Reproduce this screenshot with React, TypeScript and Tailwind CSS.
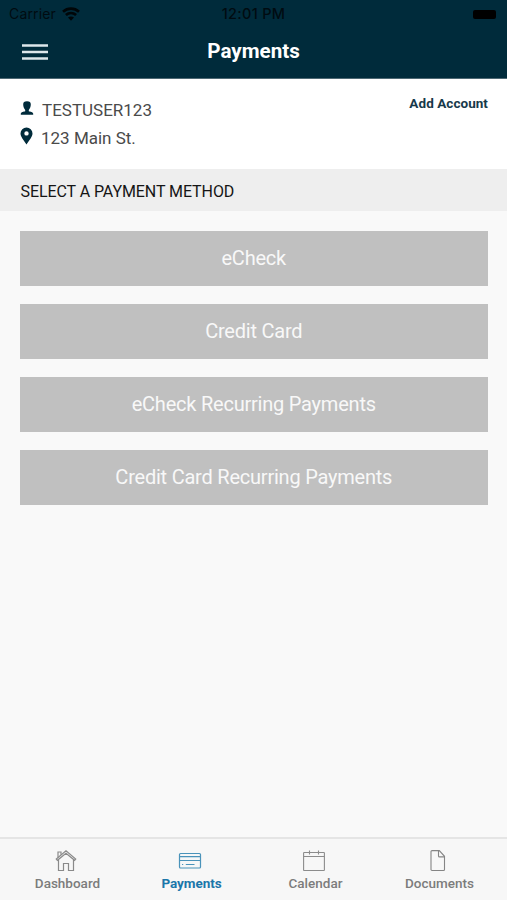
import type { ReactNode } from "react";

const methods = ["eCheck", "Credit Card", "eCheck Recurring Payments", "Credit Card Recurring Payments"];

function WifiIcon() {
  return (
    <svg className="ml-[6px] h-[15px] w-[18px]" viewBox="0 0 18 15" fill="none" stroke="#000608" strokeWidth="2.7">
      <path d="M1 4.7C5.6.6 12.4.6 17 4.7M3.9 8.1c3-2.7 7.2-2.7 10.2 0" />
      <path d="M6 10.5c1.7-1.5 4.300-1.500 6 0L9 13.700Z" fill="#000608" stroke="none" />
    </svg>
  );
}

function MenuIcon() {
  return (
    <svg className="h-[16px] w-[26px]" viewBox="0 0 26 16" fill="none" stroke="#dde7eb" strokeWidth="2.500">
      <path d="M0 1.500h26M0 8h26M0 14.500h26" />
    </svg>
  );
}

function HomeIcon() {
  return (
    <svg className="h-[22px] w-[22px]" viewBox="0 0 22 22" fill="none" stroke="#8a8a8a" strokeWidth="1.200">
      <path d="M3.500 10v10.500h5v-7h5v7h5V10" />
      <path d="M1.300 9 11 .9 20.700 9l-1.100 1.300L11 3.200l-8.600 7.100Z" />
      <path d="M3 7.400V2h3v2.800" />
    </svg>
  );
}

function CardIcon() {
  return (
    <svg className="h-[22px] w-[24px]" viewBox="0 0 24 22" fill="none" stroke="#4a93ba" strokeWidth="1.200">
      <rect x="1.500" y="3.500" width="21" height="14.500" rx="1" />
      <path d="M1.500 6.700h21M1.500 10.500h21M4 14.500h1.200M7.800 14.500h8.700" />
    </svg>
  );
}

function CalendarIcon() {
  return (
    <svg className="h-[22px] w-[22px]" viewBox="0 0 22 22" fill="none" stroke="#8c8c8c" strokeWidth="1.100">
      <rect x=".6" y="2.500" width="20.800" height="18" rx=".6" />
      <path d="M.5 6.500h21M6.500 .5v4M15.500 .5v4" />
    </svg>
  );
}

function DocumentIcon() {
  return (
    <svg className="h-[22px] w-[16px]" viewBox="0 0 16 22" fill="none" stroke="#858585" strokeWidth="1.100">
      <path d="M2 .6h7.300l5.200 5.700v13.200a1 1 0 0 1-1 1H2a1 1 0 0 1-1-1V1.600a1 1 0 0 1 1-1Z" />
      <path d="M8.500.7v5.200a1 1 0 0 0 1 1h5" />
    </svg>
  );
}

function Tab({ label, icon, active = false }: { label: string; icon: ReactNode; active?: boolean }) {
  return (
    <div className="flex w-[124px] flex-col items-center">
      <div className="mr-[3px] flex h-[22px] justify-center">{icon}</div>
      <span
        className={`mt-[4px] text-[13.500px] leading-[15px] ${
          active ? "font-bold tracking-[-0.050px] text-[#1b76aa]" : "font-medium text-[#7c7c7c]"
        }`}
      >
        {label}
      </span>
    </div>
  );
}

export default function App() {
  return (
    <div className="flex h-[900px] w-[507px] flex-col overflow-hidden bg-[#f9f9f9] font-[Roboto,sans-serif]">
      <header className="h-[79px] shrink-0 border-b border-[#4d6873] bg-[#002b3b] px-[9px]">
        <div className="grid h-[28px] grid-cols-3 items-center text-[#000b11]">
          <div className="flex items-center">
            <span className="font-[Inter,sans-serif] text-[14px] leading-[16px] tracking-[0.15px]">Carrier</span>
            <WifiIcon />
          </div>
          <span className="text-center font-[Inter,sans-serif] text-[14.500px] leading-[16px] font-medium tracking-[0.300px]">
            12:01 PM
          </span>
          <div className="flex justify-end pr-[2px]">
            <div className="h-[9px] w-[23px] rounded-[2px] bg-black" />
          </div>
        </div>
        <div className="grid h-[46px] grid-cols-[40px_1fr_40px] items-center">
          <button className="mt-px ml-[13px] w-[26px]" aria-label="Menu">
            <MenuIcon />
          </button>
          <h1 className="text-center text-[20.600px] leading-[24px] font-bold text-white">Payments</h1>
        </div>
      </header>

      <section className="flex h-[90px] shrink-0 justify-between bg-white pr-[19px] pl-[20px]">
        <div className="pt-[17px] text-[17px] leading-[28px] text-[#4a4a4a]">
          <div className="flex items-center">
            <svg className="mb-[4px] h-[14px] w-[14px]" viewBox="0 0 14 14" fill="#002b3b">
              <path d="M7 .3c2.800 0 3.800 1.200 3.800 3.200 0 2-.8 4.200-2 5.400v1.300c1.200.5 4.400.8 4.400 2.600v1H.8v-1c0-1.800 3.200-2.100 4.400-2.600V8.900c-1.200-1.200-2-3.400-2-5.400C3.200 1.500 4.200.3 7 .3Z" />
            </svg>
            <span className="ml-[8px]">TESTUSER123</span>
          </div>
          <div className="flex items-center">
            <svg className="mb-[5px] h-[18px] w-[13px]" viewBox="0 0 13 18" fill="#002b3b">
              <path
                fillRule="evenodd"
                d="M6.500.5a6 6 0 0 1 6 6c0 3.500-3.400 6.500-6 11-2.600-4.500-6-7.500-6-11a6 6 0 0 1 6-6Zm0 3.700a2.200 2.200 0 1 0 0 4.400 2.200 2.200 0 0 0 0-4.400Z"
              />
            </svg>
            <span className="ml-[8px]">123 Main St.</span>
          </div>
        </div>
        <a className="pt-[16px] text-[13.500px] leading-[16px] font-bold tracking-[0.050px] text-[#17394a]">Add Account</a>
      </section>

      <h2 className="flex h-[42px] shrink-0 items-center bg-[#eeeeee] px-[20.500px] pt-[3px] text-[16px] tracking-[-0.080px] text-[#151515]">
        SELECT A PAYMENT METHOD
      </h2>

      <main className="flex flex-1 flex-col gap-[18.500px] pt-[20px] pr-[19.500px] pl-[20px]">
        {methods.map((label) => (
          <button
            key={label}
            className="h-[54.500px] w-full shrink-0 bg-[#c0c0c0] text-[20px] tracking-[-0.220px] text-[#f8f8f8]"
          >
            {label}
          </button>
        ))}
      </main>

      <nav className="flex h-[63px] shrink-0 justify-center border-t-2 border-[#e5e5e5] bg-[#f7f7f7] pt-[11px]">
        <Tab label="Dashboard" icon={<HomeIcon />} />
        <Tab label="Payments" icon={<CardIcon />} active />
        <Tab label="Calendar" icon={<CalendarIcon />} />
        <Tab label="Documents" icon={<DocumentIcon />} />
      </nav>
    </div>
  );
}
